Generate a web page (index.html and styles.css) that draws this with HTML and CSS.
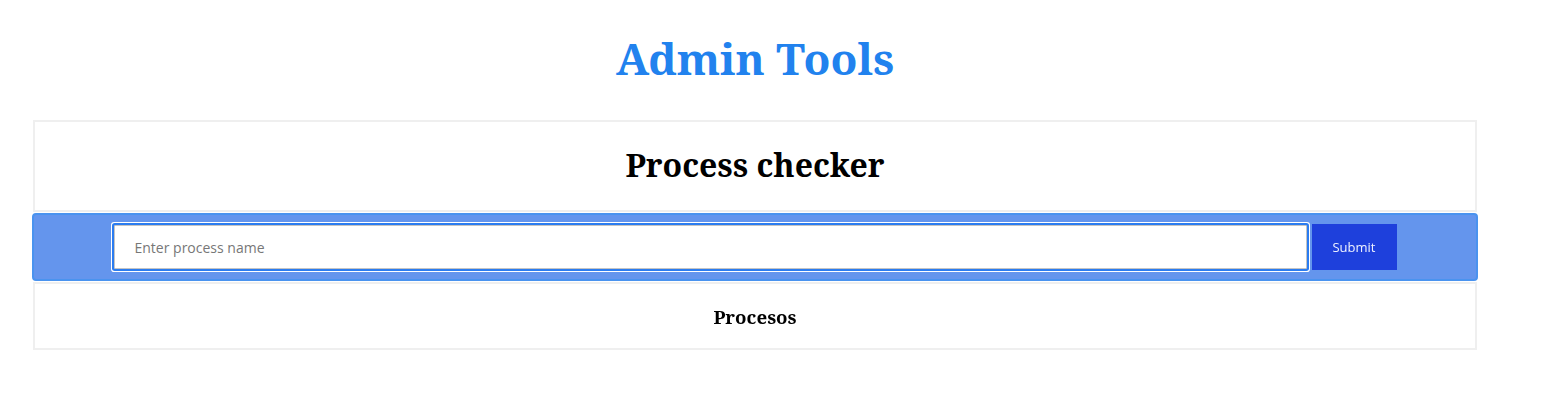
FILE: index.html
```html
<!DOCTYPE html>
<html lang="en">
<head>
<meta charset="utf-8">
<title>Admin Tools</title>
<link rel="stylesheet" href="styles.css">
</head>
<body>
<div class="wrap">
  <h1 class="title">Admin Tools</h1>
  <section class="card">
    <div class="card-head">
      <h2 class="card-title">Process checker</h2>
    </div>
    <form class="band">
      <input class="proc-input" type="text" placeholder="Enter process name" autofocus>
      <button class="submit" type="button">Submit</button>
    </form>
    <div class="card-foot">
      <h3 class="foot-title">Procesos</h3>
    </div>
  </section>
</div>
</body>
</html>
```

FILE: styles.css
```css
html, body {
  margin: 0;
  padding: 0;
  background: #ffffff;
}
body {
  font-family: "Noto Serif", "DejaVu Serif", serif;
  color: #000;
}
.wrap {
  width: 1444px;
  margin-left: 33px;
}
.title {
  margin: 0;
  padding-top: 28px;
  font-size: 44px;
  line-height: 60px;
  font-weight: 700;
  color: #2182ee;
  text-align: center;
}
.card {
  margin-top: 32px;
  display: flex;
  flex-direction: column;
  gap: 1px;
}
.card-head {
  border: 2px solid #efefef;
  padding: 21px 0 23px;
  text-align: center;
}
.card-title {
  margin: 0;
  font-size: 32px;
  line-height: 44px;
  font-weight: 700;
}
.band {
  margin: 0 -1px;
  height: 64px;
  background: #6495ed;
  border: 2px solid #4a93ef;
  border-radius: 4px;
  display: flex;
  align-items: center;
  justify-content: center;
  gap: 5px;
}
.proc-input {
  box-sizing: border-box;
  width: 1193px;
  height: 44px;
  margin: 0;
  padding: 0 0 0 20px;
  border: 1px solid #c4c4c4;
  border-radius: 1px;
  outline: none;
  box-shadow: 0 0 0 2px #2b7cf0, 0 0 0 3px #ffffff;
  background: #fff;
  font-family: "Open Sans", "Noto Sans", sans-serif;
  font-size: 14px;
  color: #222;
  caret-color: #000;
}
.proc-input::placeholder {
  color: #777777;
}
.submit {
  box-sizing: border-box;
  width: 85px;
  height: 46px;
  border: none;
  border-radius: 0;
  background: #1e40dc;
  color: #eef1ff;
  font-family: "Open Sans", "Noto Sans", sans-serif;
  font-size: 13px;
  padding: 0;
}
.card-foot {
  border: 2px solid #efefef;
  padding: 20px 0 18px;
  text-align: center;
}
.foot-title {
  margin: 0;
  font-size: 18.72px;
  line-height: 26px;
  font-weight: 700;
}
```
